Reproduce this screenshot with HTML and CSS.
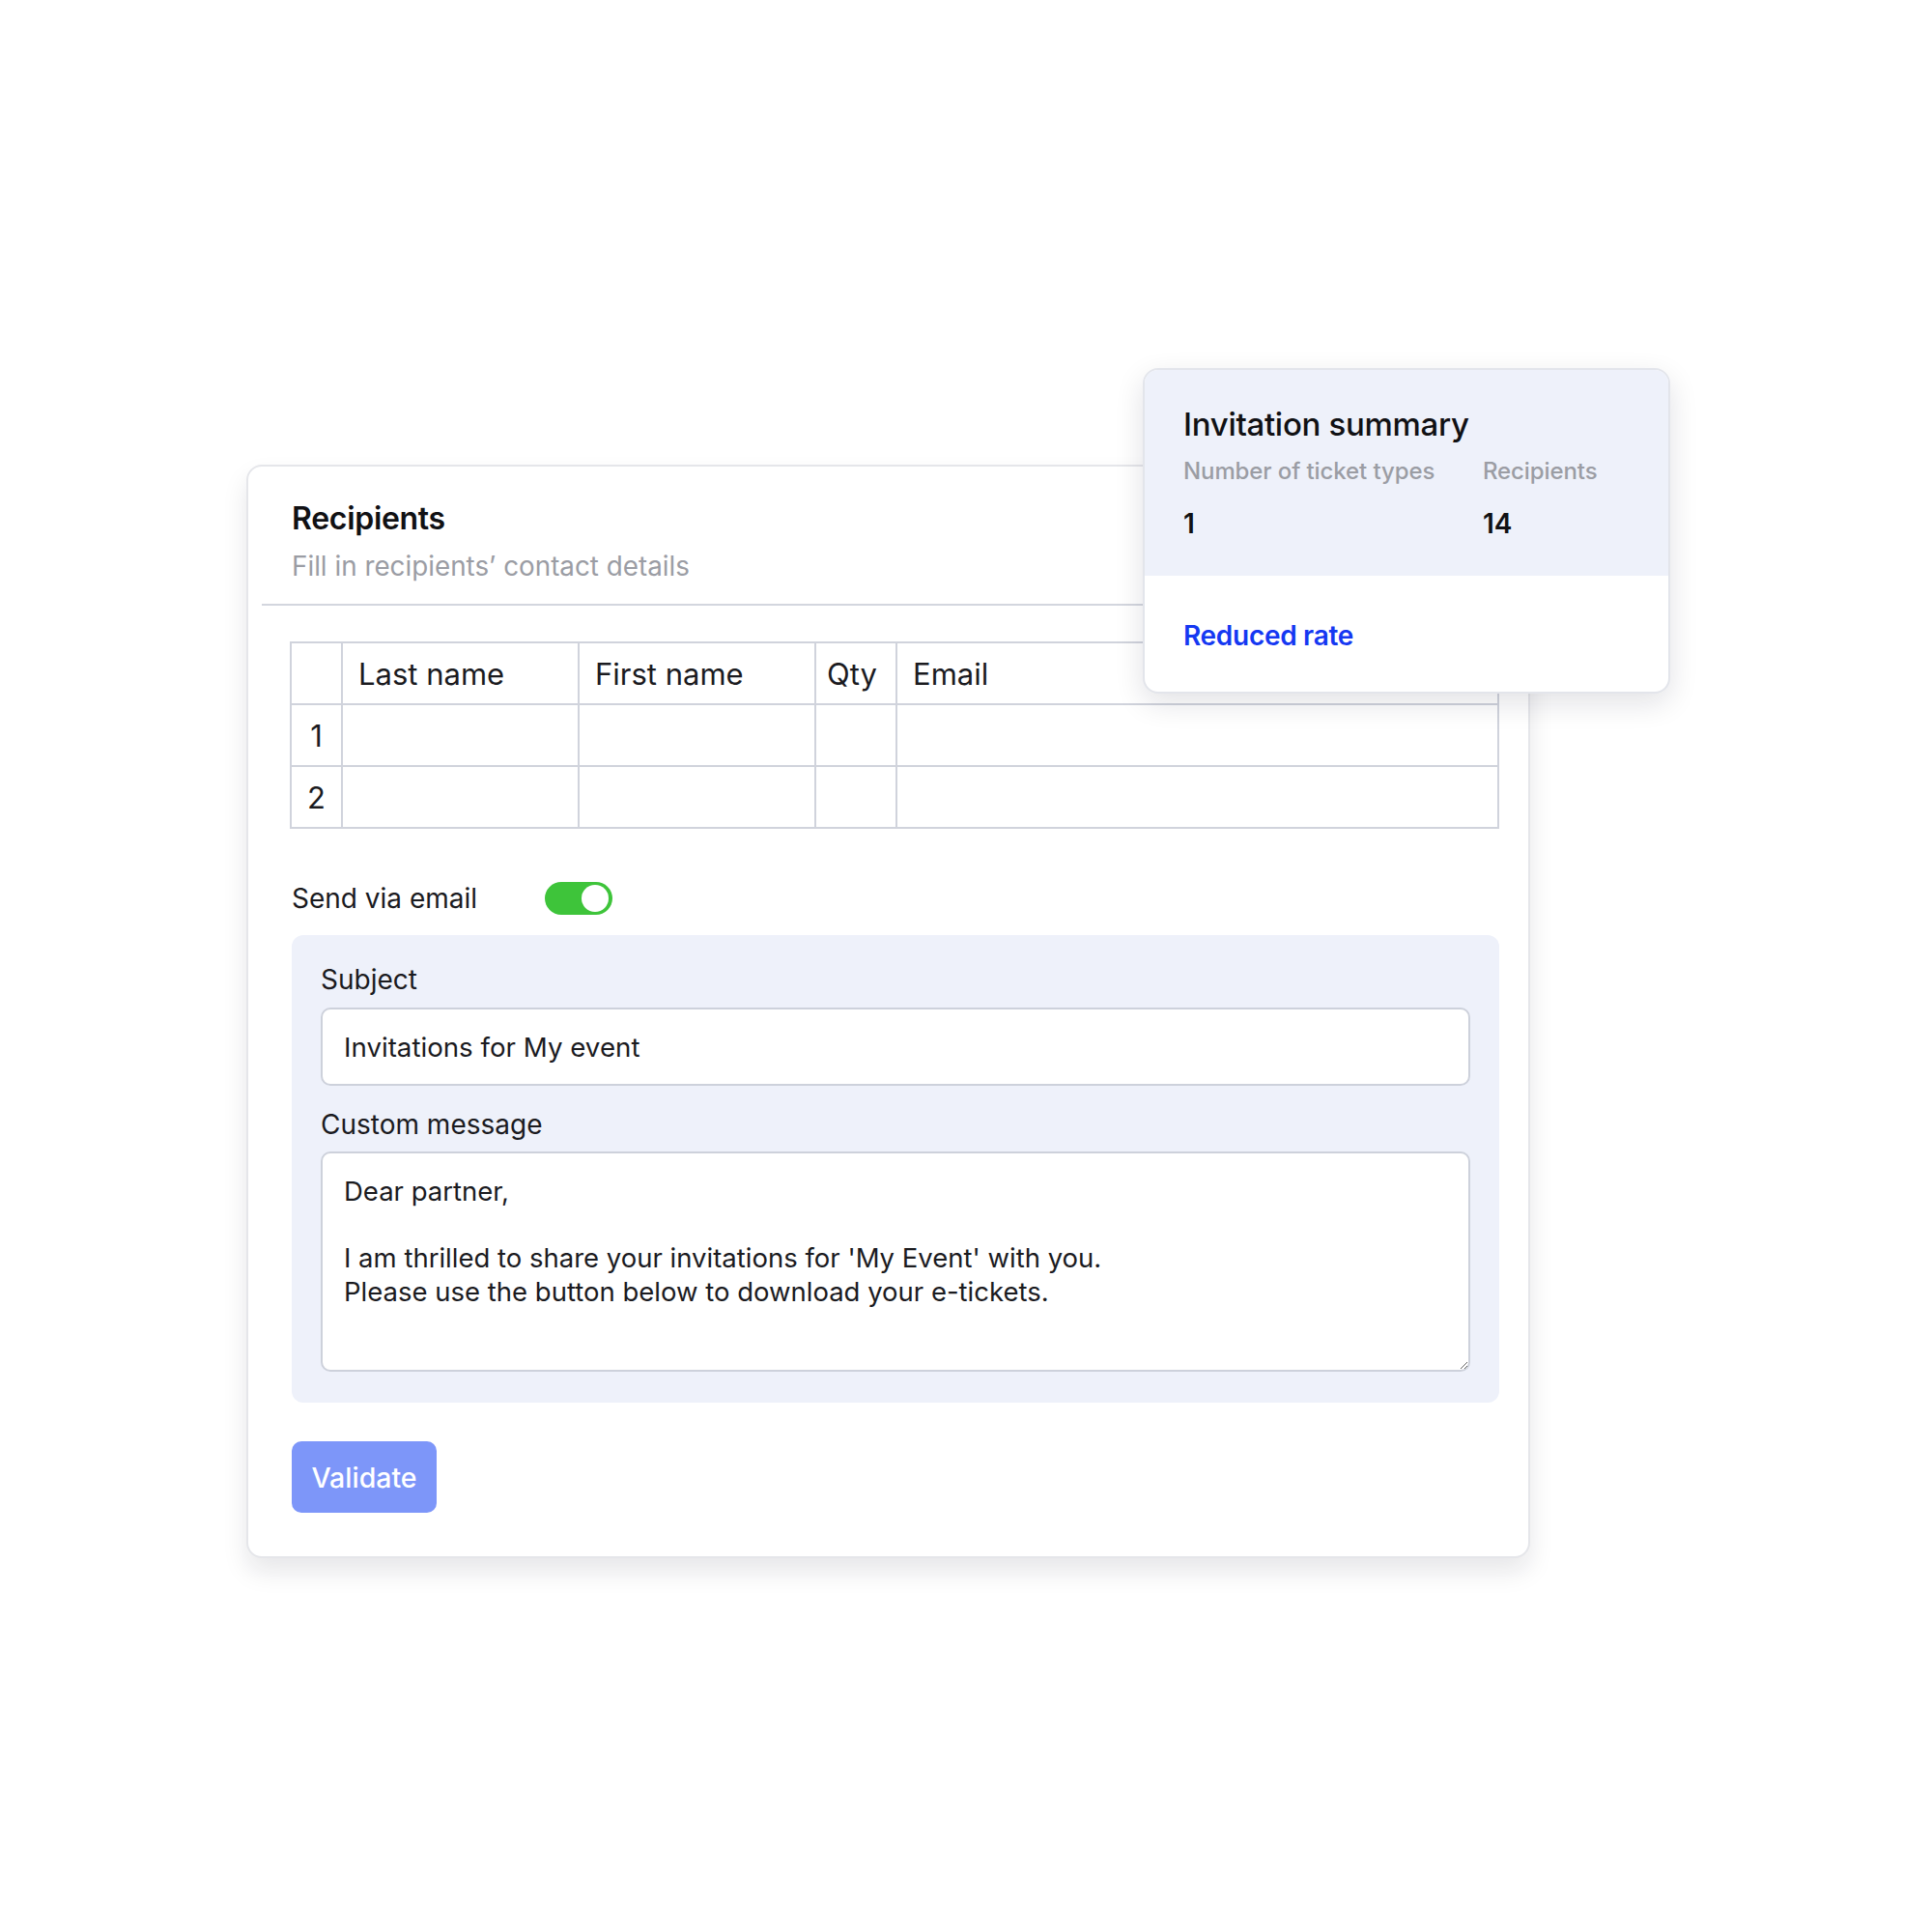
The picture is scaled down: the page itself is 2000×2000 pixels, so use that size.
FILE: index.html
```html
<!DOCTYPE html>
<html lang="en">
<head>
<meta charset="utf-8">
<title>Recipients</title>
<link rel="stylesheet" href="styles.css">
</head>
<body>
<div class="stage">
  <section class="card">
    <header class="card-head">
      <h1 class="card-title">Recipients</h1>
      <p class="card-sub">Fill in recipients’ contact details</p>
    </header>
    <div class="card-body">
      <table class="grid">
        <colgroup>
          <col class="c-idx"><col class="c-name"><col class="c-name"><col class="c-qty"><col>
        </colgroup>
        <thead>
          <tr><th></th><th>Last name</th><th>First name</th><th>Qty</th><th>Email</th></tr>
        </thead>
        <tbody>
          <tr><td class="idx">1</td><td></td><td></td><td></td><td></td></tr>
          <tr><td class="idx">2</td><td></td><td></td><td></td><td></td></tr>
        </tbody>
      </table>

      <div class="send-row">
        <span class="send-label">Send via email</span>
        <span class="toggle"><span class="knob"></span></span>
      </div>

      <div class="mail-panel">
        <label class="field-label">Subject</label>
        <div class="text-input">Invitations for My event</div>
        <label class="field-label second">Custom message</label>
        <textarea class="message">Dear partner,

I am thrilled to share your invitations for 'My Event' with you.
Please use the button below to download your e-tickets.</textarea>
      </div>

      <button class="validate">Validate</button>
    </div>
  </section>

  <aside class="summary">
    <div class="summary-top">
      <h2 class="summary-title">Invitation summary</h2>
      <div class="summary-grid">
        <span class="s-label">Number of ticket types</span>
        <span class="s-label">Recipients</span>
        <span class="s-value">1</span>
        <span class="s-value">14</span>
      </div>
    </div>
    <div class="summary-bottom">
      <span class="rate">Reduced rate</span>
    </div>
  </aside>
</div>
</body>
</html>
```

FILE: styles.css
```css
* { box-sizing: border-box; }

html, body {
  margin: 0;
  padding: 0;
  background: #ffffff;
}

body {
  font-family: Inter, "Noto Sans", "Liberation Sans", sans-serif;
  color: #1b1b1f;
}

.stage {
  position: relative;
  width: 2000px;
  height: 2000px;
  padding-top: 481px;
  padding-left: 255px;
}

.card {
  width: 1329px;
  background: #fff;
  border: 2px solid #e5e6ea;
  border-radius: 16px;
  box-shadow: 0 14px 26px rgba(20, 20, 40, 0.10);
}

.card-head {
  margin: 0 14px;
  padding: 34px 30px 21px 31px;
  border-bottom: 2px solid #d3d6de;
}

.card-title {
  margin: 0;
  font-size: 32px;
  line-height: 40px;
  font-weight: 600;
  letter-spacing: -0.3px;
  color: #111114;
}

.card-sub {
  margin: 11px 0 0;
  font-size: 27.8px;
  line-height: 36px;
  font-weight: 400;
  color: #9b9da4;
  letter-spacing: 0;
}

.card-body {
  padding: 37px 31px 45px 43px;
}

.grid {
  width: 1252px;
  border-collapse: collapse;
  table-layout: fixed;
  border: 2px solid #d0d3dc;
}

.c-idx { width: 53px; }
.c-name { width: 245px; }
.c-qty { width: 84px; }

.grid th,
.grid td {
  height: 64px;
  border: 2px solid #d0d3dc;
  padding: 0 0 0 16px;
  font-size: 31px;
  font-weight: 400;
  text-align: left;
  vertical-align: middle;
  color: #1b1b1f;
  letter-spacing: 0;
}

.grid th:nth-child(4) { padding-left: 11px; }

.grid td.idx {
  padding: 0;
  text-align: center;
}

.send-row {
  display: flex;
  align-items: center;
  gap: 70px;
  margin-top: 55px;
  padding-left: 2px;
}

.send-label {
  font-size: 28px;
  line-height: 34px;
  letter-spacing: 0;
}

.toggle {
  position: relative;
  width: 70px;
  height: 34px;
  border-radius: 17px;
  background: #3ec43a;
}

.knob {
  position: absolute;
  right: 4px;
  top: 3px;
  width: 28px;
  height: 28px;
  border-radius: 50%;
  background: #fff;
}

.mail-panel {
  margin-top: 21px;
  margin-left: 2px;
  width: 1250px;
  background: #eef1fa;
  border-radius: 12px;
  padding: 29px 30px 32px 30px;
}

.field-label {
  display: block;
  font-size: 28px;
  line-height: 34px;
  letter-spacing: 0;
  color: #1b1b1f;
}

.field-label.second { margin-top: 23px; }

.text-input {
  margin-top: 12px;
  height: 81px;
  display: flex;
  align-items: center;
  padding-left: 22px;
  background: #fff;
  border: 2px solid #cdd1db;
  border-radius: 10px;
  font-size: 27.7px;
  letter-spacing: 0;
}

.message {
  display: block;
  margin-top: 11px;
  width: 100%;
  height: 228px;
  padding: 22px 22px;
  background: #fff;
  border: 2px solid #cdd1db;
  border-radius: 10px;
  font-family: Inter, "Noto Sans", "Liberation Sans", sans-serif;
  font-size: 27.5px;
  line-height: 34.6px;
  letter-spacing: 0;
  color: #1b1b1f;
  resize: vertical;
  outline: none;
  overflow: hidden;
}

.validate {
  display: block;
  margin-top: 40px;
  margin-left: 2px;
  width: 150px;
  height: 74px;
  border: 0;
  border-radius: 10px;
  background: #7d96f9;
  color: #fff;
  font-family: Inter, "Noto Sans", "Liberation Sans", sans-serif;
  font-size: 28.5px;
  font-weight: 500;
  letter-spacing: 0;
}

.summary {
  position: absolute;
  left: 1183px;
  top: 381px;
  width: 546px;
  height: 337px;
  background: #fff;
  border: 2px solid #e3e5eb;
  border-radius: 16px;
  overflow: hidden;
  box-shadow: 0 10px 30px rgba(20, 20, 40, 0.12);
}

.summary-top {
  background: #eef1fa;
  height: 213px;
  padding: 36px 40px 0;
}

.summary-title {
  margin: 0;
  font-size: 33px;
  line-height: 40px;
  font-weight: 500;
  letter-spacing: -0.3px;
  color: #111114;
}

.summary-grid {
  display: grid;
  grid-template-columns: 310px auto;
  row-gap: 22px;
  margin-top: 14px;
}

.s-label {
  font-size: 24px;
  line-height: 30px;
  font-weight: 500;
  color: #9b9da4;
  letter-spacing: -0.1px;
}

.s-value {
  font-size: 28px;
  line-height: 34px;
  font-weight: 600;
  color: #111114;
}

.summary-bottom {
  padding: 45px 40px 0;
}

.rate {
  font-size: 28px;
  line-height: 34px;
  font-weight: 600;
  color: #1538f2;
  letter-spacing: -0.3px;
}
```
